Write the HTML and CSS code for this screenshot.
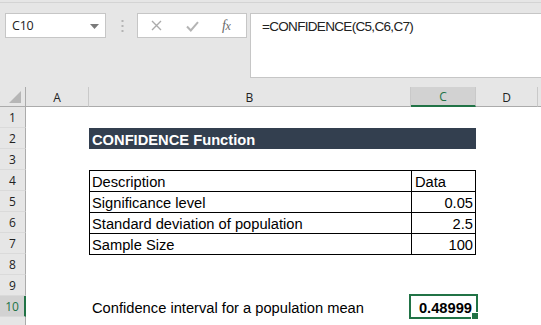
FILE: index.html
```html
<!DOCTYPE html>
<html>
<head>
<meta charset="utf-8">
<link rel="stylesheet" href="styles.css">
</head>
<body>
<div class="app">
  <div class="fbar">
    <div class="namebox">
      <span class="nb-text">C10</span>
      <svg class="nb-arrow" width="9" height="5" viewBox="0 0 9 5"><path d="M0 0H9L4.5 5Z" fill="#7a7a7a"/></svg>
    </div>
    <div class="dots">
      <svg width="3" height="12" viewBox="0 0 3 12"><rect x="0.5" y="0" width="2" height="2" fill="#b4b4b4"/><rect x="0.5" y="5" width="2" height="2" fill="#b4b4b4"/><rect x="0.5" y="10" width="2" height="2" fill="#b4b4b4"/></svg>
    </div>
    <div class="btns">
      <svg class="ic-x" width="11" height="11" viewBox="0 0 11 11"><path d="M1 1L10 10M10 1L1 10" stroke="#ababab" stroke-width="1.4"/></svg>
      <svg class="ic-ok" width="13" height="11" viewBox="0 0 13 11"><path d="M1 5.5L4.8 9.5L12 1.2" fill="none" stroke="#b4b4b4" stroke-width="2"/></svg>
      <span class="ic-fx">f<span class="fx-x">x</span></span>
    </div>
    <div class="formula">=CONFIDENCE(C5,C6,C7)</div>
  </div>

  <div class="sheet">
    <div class="ch corner"><svg width="12" height="12" viewBox="0 0 12 12"><path d="M12 0V12H0Z" fill="#b6b6b6"/></svg></div>
    <div class="ch">A</div>
    <div class="ch">B</div>
    <div class="ch ch-sel">C</div>
    <div class="ch">D</div>
    <div class="ch ch-rest"></div>

    <div class="rh">1</div><div class="c"></div><div class="c"></div><div class="c"></div><div class="c"></div><div class="c"></div>

    <div class="rh">2</div><div class="c"></div><div class="c title">CONFIDENCE Function</div><div class="c title"></div><div class="c"></div><div class="c"></div>

    <div class="rh">3</div><div class="c"></div><div class="c"></div><div class="c"></div><div class="c"></div><div class="c"></div>

    <div class="rh">4</div><div class="c"></div><div class="c t tl">Description</div><div class="c t tr">Data</div><div class="c"></div><div class="c"></div>

    <div class="rh">5</div><div class="c"></div><div class="c t tl">Significance level</div><div class="c t tr num">0.05</div><div class="c"></div><div class="c"></div>

    <div class="rh">6</div><div class="c"></div><div class="c t tl">Standard deviation of population</div><div class="c t tr num">2.5</div><div class="c"></div><div class="c"></div>

    <div class="rh">7</div><div class="c"></div><div class="c t tl">Sample Size</div><div class="c t tr num">100</div><div class="c"></div><div class="c"></div>

    <div class="rh">8</div><div class="c"></div><div class="c tb"></div><div class="c tb"></div><div class="c"></div><div class="c"></div>

    <div class="rh">9</div><div class="c"></div><div class="c"></div><div class="c"></div><div class="c"></div><div class="c"></div>

    <div class="rh rh-sel">10</div><div class="c"></div><div class="c">Confidence interval for a population mean</div><div class="c num bold sel">0.48999<span class="handle"></span></div><div class="c"></div><div class="c"></div>

    <div class="rh"></div><div class="c"></div><div class="c"></div><div class="c"></div><div class="c"></div><div class="c"></div>
  </div>
</div>
</body>
</html>
```

FILE: styles.css
```css
* { box-sizing: border-box; }
html, body { margin: 0; padding: 0; }
body {
  width: 541px;
  height: 325px;
  overflow: hidden;
  background: #e6e6e6;
  font-family: "Liberation Sans", Arial, sans-serif;
}
.app {
  padding-top: 2px;
}
.fbar {
  border-top: 1px solid #d4d4d4;
  display: flex;
  align-items: flex-start;
  padding: 10px 0 10px 5px;
  height: 85px;
}
.namebox {
  width: 101px;
  height: 25px;
  background: #fff;
  border: 1px solid #c6c6c6;
  display: flex;
  align-items: center;
  justify-content: space-between;
  padding: 0 6px 0 6px;
}
.nb-text {
  font-family: "Open Sans", "Liberation Sans", sans-serif;
  font-size: 12.5px;
  color: #222;
  letter-spacing: -0.2px;
}
.nb-arrow { margin-top: 1px; }
.dots {
  width: 31px;
  height: 25px;
  display: flex;
  align-items: center;
  justify-content: center;
  padding-left: 1px;
}
.btns {
  width: 110px;
  height: 25px;
  background: #fff;
  border: 1px solid #c6c6c6;
  display: flex;
  align-items: center;
  padding-left: 13px;
}
.ic-x { margin-right: 24px; }
.ic-ok { margin-right: 23px; margin-top: 1px; }
.ic-fx {
  font-family: "Liberation Serif", "Times New Roman", serif;
  font-style: italic;
  font-size: 14px;
  color: #6a6a6a;
  letter-spacing: -0.5px;
}
.fx-x { font-size: 12px; }
.formula {
  margin-left: 3px;
  flex: 1;
  height: 65px;
  background: #fff;
  border: 1px solid #c6c6c6;
  border-right: none;
  padding: 4px 0 0 11px;
  font-size: 13.5px;
  color: #222;
  letter-spacing: -0.68px;
  line-height: 18px;
}

.sheet {
  display: grid;
  grid-template-columns: 26px 63px 322px 65px 62px 1fr;
  grid-template-rows: 20px repeat(11, 21px);
  background: #fff;
}
.ch {
  background: #e6e6e6;
  border-right: 1px solid #c9c9c9;
  border-bottom: 1px solid #ababab;
  display: flex;
  align-items: center;
  justify-content: center;
  font-family: "Open Sans", "Liberation Sans", sans-serif;
  font-size: 12px;
  color: #222;
  padding-top: 1px;
}
.ch.corner {
  justify-content: flex-end;
  align-items: flex-end;
  padding: 0 4px 3px 0;
  border-right-color: #ababab;
}
.ch-sel {
  background: #d2d2d2;
  color: #217346;
  border-bottom: 2px solid #217346;
}
.ch-rest { border-right: none; }
.rh {
  background: #e6e6e6;
  border-right: 1px solid #ababab;
  border-bottom: 1px solid #dadada;
  display: flex;
  align-items: center;
  justify-content: center;
  font-family: "Open Sans", "Liberation Sans", sans-serif;
  font-size: 12px;
  color: #222;
  padding-top: 1px;
}
.rh-sel {
  background: #d2d2d2;
  color: #217346;
  border-right: 2px solid #217346;
}
.c {
  position: relative;
  display: flex;
  align-items: flex-end;
  padding: 0 2px 0 3px;
  font-size: 14.7px;
  line-height: 17px;
  color: #000;
  white-space: nowrap;
}
.title {
  background: #333f4f;
  color: #fff;
  font-weight: bold;
}
.t { border-top: 1px solid #000; padding-left: 2px; }
.tl { border-left: 1px solid #000; }
.tr { border-left: 1px solid #000; border-right: 1px solid #000; padding-left: 3px; }
.tb { border-top: 1px solid #000; }
.num { justify-content: flex-end; padding-right: 3px; }
.tr.num { padding-right: 2px; }
.bold { font-weight: bold; }
.sel {
  outline: 2px solid #217346;
  outline-offset: 0;
  padding-right: 4px;
}
.handle {
  position: absolute;
  right: -3px;
  bottom: -3px;
  width: 6px;
  height: 6px;
  background: #217346;
  border: 1px solid #fff;
  box-sizing: content-box;
}
```
